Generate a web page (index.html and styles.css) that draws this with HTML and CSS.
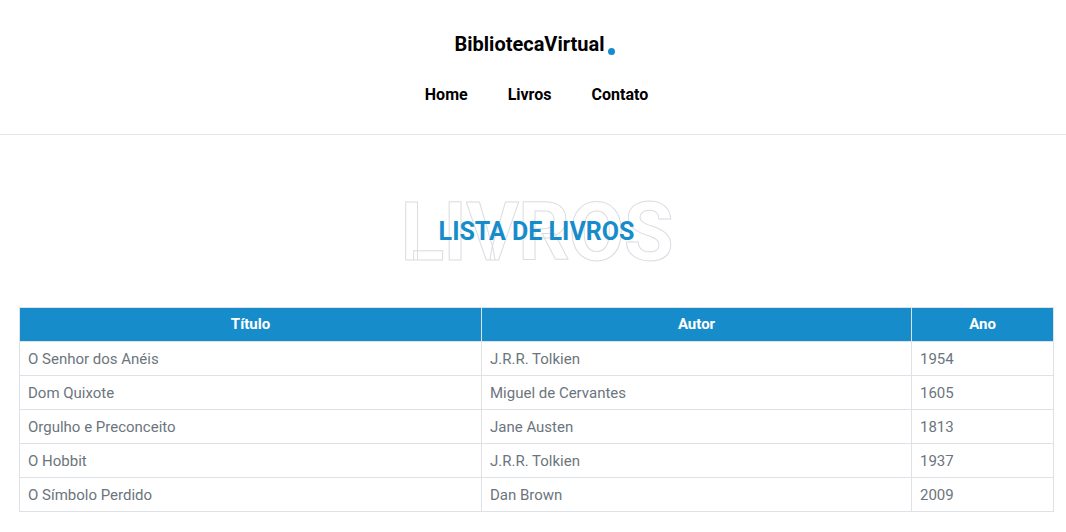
FILE: index.html
```html
<!DOCTYPE html>
<html lang="pt-BR">
<head>
<meta charset="utf-8">
<title>Biblioteca Virtual</title>
<link rel="stylesheet" href="styles.css">
</head>
<body>
<header class="header">
  <div class="header-inner">
    <a class="logo" href="#">BibliotecaVirtual<span class="dot"></span></a>
    <nav class="nav">
      <a href="#">Home</a>
      <a href="#">Livros</a>
      <a href="#">Contato</a>
    </nav>
  </div>
</header>
<main class="main">
  <div class="section-title" data-title="LIVROS">
    <h2>LISTA DE LIVROS</h2>
  </div>
  <table class="books">
    <thead>
      <tr><th class="c1">Título</th><th class="c2">Autor</th><th class="c3">Ano</th></tr>
    </thead>
    <tbody>
      <tr><td>O Senhor dos Anéis</td><td>J.R.R. Tolkien</td><td>1954</td></tr>
      <tr><td>Dom Quixote</td><td>Miguel de Cervantes</td><td>1605</td></tr>
      <tr><td>Orgulho e Preconceito</td><td>Jane Austen</td><td>1813</td></tr>
      <tr><td>O Hobbit</td><td>J.R.R. Tolkien</td><td>1937</td></tr>
      <tr><td>O Símbolo Perdido</td><td>Dan Brown</td><td>2009</td></tr>
    </tbody>
  </table>
</main>
</body>
</html>
```

FILE: styles.css
```css
* { box-sizing: border-box; }
html, body { margin: 0; padding: 0; background: #fff; }
body { font-family: Roboto, "Open Sans", Arial, sans-serif; color: #444; }

.header { border-bottom: 1px solid #e6e6e6; }
.header-inner {
  padding: 31px 12px 0 19px;
  height: 134px;
  display: flex;
  flex-direction: column;
  align-items: center;
}
.logo {
  font-size: 20px;
  font-weight: 700;
  color: #000;
  text-decoration: none;
  line-height: 26px;
  display: flex;
  align-items: flex-end;
  margin-right: 4px;
}
.dot {
  width: 7px; height: 7px;
  border-radius: 50%;
  background: #178ccb;
  margin-left: 3px;
  margin-bottom: 2px;
}
.nav { display: flex; margin-top: 26px; }
.nav a {
  font-size: 16px;
  font-weight: 700;
  color: #000;
  text-decoration: none;
  padding: 0 20px;
  line-height: 24px;
}

.main { padding: 0 12px 20px 19px; }
.section-title {
  position: relative;
  height: 172px;
  display: flex;
  align-items: center;
  justify-content: center;
}
.section-title::before {
  content: attr(data-title);
  position: absolute;
  left: 0; right: 0;
  top: 50px;
  text-align: center;
  font-size: 81px;
  font-weight: 700;
  line-height: 96px;
  color: transparent;
  -webkit-text-stroke: 1px #dadde2;
  letter-spacing: -1px;
}
.section-title h2 {
  position: relative;
  margin: 0;
  margin-top: 22px;
  font-size: 25px;
  font-weight: 700;
  color: #178ccb;
  line-height: 30px;
}

.books {
  width: 100%;
  border-collapse: collapse;
  font-size: 15px;
}
.books th, .books td {
  border: 1px solid #dee2e6;
  height: 34px;
  padding: 0 8px;
}
.books th {
  background: #178ccb;
  color: #fff;
  font-weight: 700;
  text-align: center;
  padding-bottom: 2px;
}
.books th + th { border-left-color: #fff; }
.books td { color: #6c757d; text-align: left; }
.c1 { width: 462px; }
.c2 { width: 430px; }
```
